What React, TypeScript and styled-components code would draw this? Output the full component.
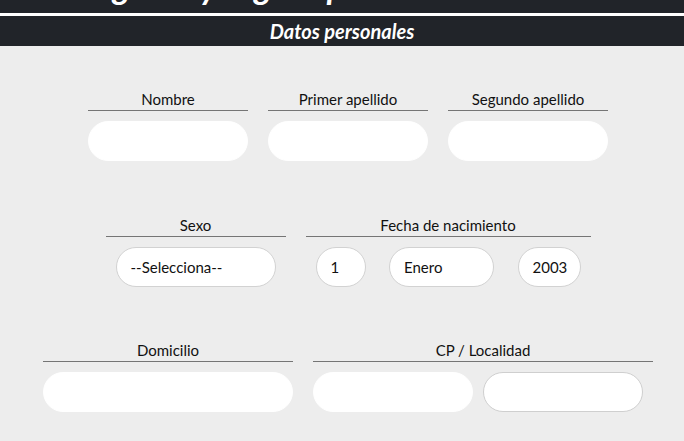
import React from "react";
import styled, { createGlobalStyle } from "styled-components";

const Global = createGlobalStyle`
  html, body { margin: 0; padding: 0; background: #ededed; }
  body { font-family: "Lato", "Liberation Sans", sans-serif; color: #111; }
  * { box-sizing: border-box; }
`;

const TitleStrip = styled.header`
  height: 13px;
  overflow: hidden;
  background: #212429;
  border-bottom: 3px solid #ffffff;
  box-sizing: content-box;
`;

const Title = styled.h1`
  margin: -31px 0 0 0;
  padding-left: 77px;
  font-family: "Lato", sans-serif;
  font-weight: 700;
  font-style: italic;
  font-size: 34px;
  line-height: 34px;
  color: #fff;
  white-space: nowrap;
`;

const SectionBar = styled.h2`
  margin: 0;
  height: 30px;
  background: #212429;
  color: #fff;
  font-family: "Lato", sans-serif;
  font-weight: 700;
  font-style: italic;
  font-size: 20px;
  line-height: 30px;
  text-align: center;
`;

const Form = styled.main`
  display: flex;
  flex-direction: column;
  align-items: center;
  padding: 44px 0 0 12px;
`;

const Row = styled.div<{ $mb: number }>`
  display: flex;
  gap: 20px;
  margin-bottom: ${(p) => p.$mb}px;
`;

const Field = styled.div<{ $w: number }>`
  width: ${(p) => p.$w}px;
  display: flex;
  flex-direction: column;
`;

const Label = styled.div`
  font-family: "Lato", "Liberation Sans", sans-serif;
  font-size: 15px;
  line-height: 18px;
  text-align: center;
  padding-bottom: 2px;
  border-bottom: 1px solid #757575;
  color: #111;
`;

const Controls = styled.div<{ $pad: number; $between?: boolean }>`
  display: flex;
  gap: 10px;
  margin-top: 10px;
  padding: 0 ${(p) => p.$pad}px;
  justify-content: ${(p) => (p.$between ? "space-between" : "flex-start")};
`;

const TextInput = styled.input<{ $w?: number; $bordered?: boolean }>`
  width: ${(p) => (p.$w ? `${p.$w}px` : "100%")};
  height: 40px;
  border-radius: 20px;
  border: 1px solid ${(p) => (p.$bordered ? "#cfcfcf" : "#ffffff")};
  background: #fff;
  outline: none;
  padding: 0 14px;
  font-family: "Lato", sans-serif;
  font-size: 14px;
`;

const Select = styled.div<{ $w: number }>`
  width: ${(p) => p.$w}px;
  height: 40px;
  border-radius: 20px;
  border: 1px solid #d2d2d2;
  background: #fff;
  display: flex;
  align-items: center;
  padding-left: 14px;
  font-family: "Lato", sans-serif;
  font-size: 15px;
  color: #111;
`;

export default function App() {
  return (
    <>
      <Global />
      <TitleStrip>
        <Title>Registro y seguro personal del alumno</Title>
      </TitleStrip>
      <SectionBar>Datos personales</SectionBar>
      <Form>
        <Row $mb={55}>
          <Field $w={160}>
            <Label>Nombre</Label>
            <Controls $pad={0}><TextInput /></Controls>
          </Field>
          <Field $w={160}>
            <Label>Primer apellido</Label>
            <Controls $pad={0}><TextInput /></Controls>
          </Field>
          <Field $w={160}>
            <Label>Segundo apellido</Label>
            <Controls $pad={0}><TextInput /></Controls>
          </Field>
        </Row>
        <Row $mb={54}>
          <Field $w={180}>
            <Label>Sexo</Label>
            <Controls $pad={10}><Select $w={160}>--Selecciona--</Select></Controls>
          </Field>
          <Field $w={285}>
            <Label>Fecha de nacimiento</Label>
            <Controls $pad={10} $between>
              <Select $w={50}>1</Select>
              <Select $w={105}>Enero</Select>
              <Select $w={63}>2003</Select>
            </Controls>
          </Field>
        </Row>
        <Row $mb={0}>
          <Field $w={250}>
            <Label>Domicilio</Label>
            <Controls $pad={0}><TextInput /></Controls>
          </Field>
          <Field $w={340}>
            <Label>CP / Localidad</Label>
            <Controls $pad={0}>
              <TextInput $w={160} />
              <TextInput $w={160} $bordered />
            </Controls>
          </Field>
        </Row>
      </Form>
    </>
  );
}
